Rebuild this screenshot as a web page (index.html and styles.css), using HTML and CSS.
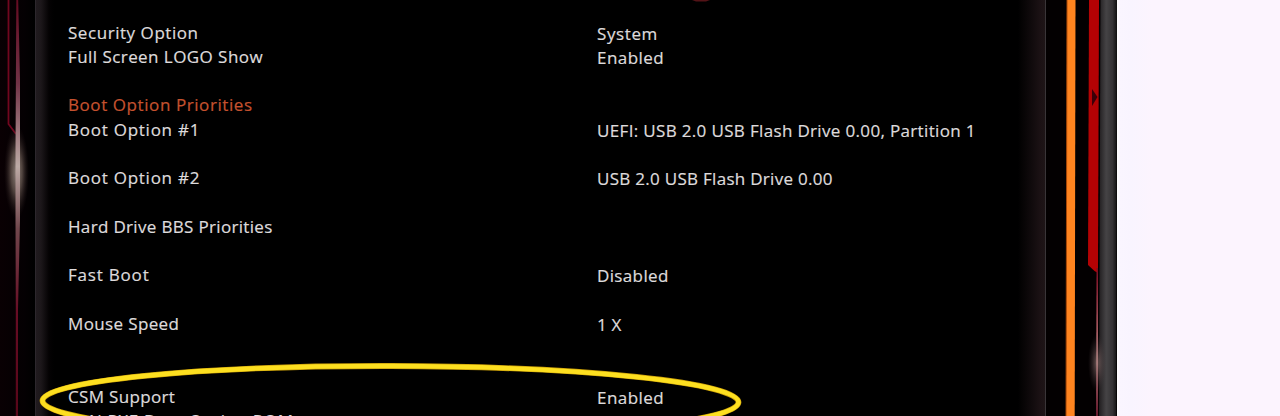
FILE: index.html
```html
<!DOCTYPE html>
<html lang="en">
<head>
<meta charset="utf-8">
<title>BIOS Features</title>
<link rel="stylesheet" href="styles.css">
</head>
<body>
<div class="screen">
  <div class="rail-left">
    <svg width="35" height="416" viewBox="0 0 35 416">
      <defs>
        <radialGradient id="glow"><stop offset="0" stop-color="#b5a59c" stop-opacity=".8"/><stop offset=".45" stop-color="#79685f" stop-opacity=".65"/><stop offset="1" stop-color="#302020" stop-opacity="0"/></radialGradient>
        <linearGradient id="beam" x1="0" y1="0" x2="0" y2="1"><stop offset="0" stop-color="#650b22"/><stop offset=".2" stop-color="#713246"/><stop offset=".4" stop-color="#bcaaa5"/><stop offset=".55" stop-color="#70464c"/><stop offset=".75" stop-color="#670c24"/><stop offset="1" stop-color="#580619"/></linearGradient>
      </defs>
      <path d="M8.500 0V124L16 134" fill="none" stroke="#72061f" stroke-width="1.800"/>
      <ellipse cx="16.500" cy="172" rx="12.500" ry="47" fill="url(#glow)"/>
      <path class="soft" d="M16.300 0H18.200L20 80V220L18 310V416H15.800V310L15.500 220V150Z" fill="url(#beam)"/>
    </svg>
  </div>
  <main class="panel">
    <div class="list">
      <div class="row"><span class="name s1">Security Option</span><span class="value v1">System</span></div>
      <div class="row"><span class="name s2">Full Screen LOGO Show</span><span class="value v2">Enabled</span></div>
      <div class="row"></div>
      <div class="row"><span class="name heading s3">Boot Option Priorities</span></div>
      <div class="row"><span class="name s4">Boot Option #1</span><span class="value v4">UEFI: USB 2.0 USB Flash Drive 0.00, Partition 1</span></div>
      <div class="row"></div>
      <div class="row"><span class="name s4">Boot Option #2</span><span class="value v5">USB 2.0 USB Flash Drive 0.00</span></div>
      <div class="row"></div>
      <div class="row"><span class="name s6">Hard Drive BBS Priorities</span></div>
      <div class="row"></div>
      <div class="row"><span class="name s7">Fast Boot</span><span class="value v7">Disabled</span></div>
      <div class="row"></div>
      <div class="row"><span class="name s8">Mouse Speed</span><span class="value v8">1 X</span></div>
      <div class="row"></div>
      <div class="row"></div>
      <div class="row"><span class="name s9">CSM Support</span><span class="value v2">Enabled</span></div>
      <div class="row"><span class="name s10">LAN PXE Boot Option ROM</span><span class="value v7">Disabled</span></div>
    </div>
  </main>
  <div class="rail-right">
    <svg width="71" height="416" viewBox="0 0 71 416">
      <defs>
        <linearGradient id="frame"><stop offset="0" stop-color="#211e20"/><stop offset=".4" stop-color="#454345"/><stop offset=".75" stop-color="#353335"/><stop offset="1" stop-color="#101010"/></linearGradient>
        <linearGradient id="streak" x1="0" y1="0" x2="0" y2="1"><stop offset="0" stop-color="#7d0b22"/><stop offset=".6" stop-color="#b57878"/><stop offset="1" stop-color="#65172b"/></linearGradient>
        <radialGradient id="spark"><stop offset="0" stop-color="#a58582" stop-opacity=".65"/><stop offset="1" stop-color="#504044" stop-opacity="0"/></radialGradient>
      </defs>
      <path d="M54.500 0H71L70.300 416H53Z" fill="url(#frame)"/>
      <path d="M21 0H29.500L28.700 416H20Z" fill="#ff841f"/>
      <path d="M21 0L20 416" stroke="#a94808" stroke-width="1"/>
      <path d="M43 0H53L52 273L48.500 271L42 265Z" fill="#b40204"/>
      <path d="M46 89L51.500 97L46 106Z" fill="#3b0008"/>
      <path d="M50.500 268H52V416H50Z" fill="url(#streak)"/>
      <ellipse cx="51" cy="363" rx="9" ry="29" fill="url(#spark)"/>
    </svg>
  </div>
  <div class="page-edge"></div>
  <svg class="annotation" width="1280" height="416" viewBox="0 0 1280 416">
    <path d="M692 0H710L706 1.500H696Z" fill="#541317"/>
    <ellipse cx="390.500" cy="401.500" rx="348" ry="35.500" transform="rotate(.12 390.500 401.500)" fill="none" stroke="#c99e08" stroke-width="5.800"/>
    <ellipse cx="390.500" cy="401.500" rx="348" ry="35.500" transform="rotate(.12 390.500 401.500)" fill="none" stroke="#fddf20" stroke-width="4.600"/>
  </svg>
</div>
</body>
</html>
```
FILE: styles.css
```css
body {
  margin: 0;
  background: #000;
}
.screen {
  position: relative;
  display: flex;
  width: 1280px;
  height: 416px;
  overflow: hidden;
  background: #020001;
  font-family: "Open Sans", "Noto Sans", sans-serif;
}
svg {
  display: block;
}
.soft {
  filter: blur(0.5px);
}
.rail-left {
  width: 35px;
  background: linear-gradient(90deg, #090003, #040002 70%, #000);
}
.panel {
  box-sizing: border-box;
  width: 1011px;
  height: 416px;
  padding: 20.5px 0 0 32px;
  border-left: 1px solid #2c272c;
  border-right: 1px solid #3a3538;
  background: linear-gradient(90deg, #211b1f 0, #1c171a 5px, #040203 13px, #000 18px, #000 982px, #1c1215 1005px, #1e1517 100%);
}
.list {
  display: grid;
  grid-auto-rows: 24.3px;
}
.row {
  display: grid;
  grid-template-columns: 529px 1fr;
  line-height: 24.3px;
  font-size: 17px;
  white-space: nowrap;
  color: #dedbdc;
  -webkit-text-stroke: 0.2px currentColor;
}
.value {
  padding-top: 1px;
}
.heading {
  color: #c5522f;
}
.s1 { letter-spacing: 0.55px; }
.s2 { letter-spacing: 0.44px; }
.s3 { letter-spacing: 0.58px; }
.s4 { letter-spacing: 0.75px; }
.s6 { letter-spacing: 0.33px; }
.s7 { letter-spacing: 0.8px; }
.s8 { letter-spacing: 0.37px; }
.s9 { letter-spacing: 0.34px; }
.s10 { letter-spacing: 0.65px; }
.v1 { letter-spacing: 0.6px; }
.v2 { letter-spacing: 0.45px; }
.v4 { letter-spacing: 0.34px; }
.v5 { letter-spacing: 0.29px; }
.v7 { letter-spacing: 0.36px; }
.v8 { letter-spacing: 0.2px; }
.rail-right {
  width: 71px;
  background: #030001;
}
.page-edge {
  flex: 1;
  background: linear-gradient(90deg, #fff 0, #faf5ff 3px, #f9f4ff 14px, #fcf4fe 35px, #fcf4fe 100%);
}
.annotation {
  position: absolute;
  inset: 0;
}
```
